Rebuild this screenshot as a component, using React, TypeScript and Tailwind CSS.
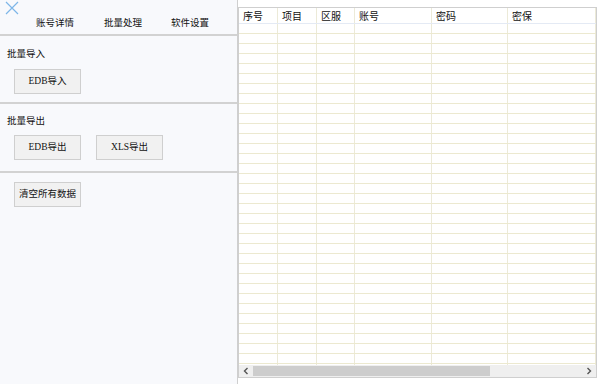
import React from "react";

const cols = [
  { w: 39, t: "序号" },
  { w: 39, t: "项目" },
  { w: 38, t: "区服" },
  { w: 77, t: "账号" },
  { w: 76, t: "密码" },
  { w: 88, t: "密保" },
];

const btnFont = { fontFamily: '"Liberation Serif", "Noto Sans CJK SC", serif' };

function Btn({ children, className = "" }: { children: React.ReactNode; className?: string }) {
  return (
    <div
      style={btnFont}
      className={
        "h-[25px] w-[67px] flex items-center justify-center border border-[#cfcfcf] bg-[#f1f1f1] text-[9.5px] text-[#111] whitespace-nowrap " +
        className
      }
    >
      {children}
    </div>
  );
}

export default function App() {
  const rows = Array.from({ length: 35 });
  return (
    <div
      className="w-[600px] h-[384px] flex bg-white overflow-hidden"
      style={{ fontFamily: '"Noto Sans CJK SC", "Liberation Sans", sans-serif' }}
    >
      {/* Left panel */}
      <div className="w-[239px] h-full flex flex-col bg-[#f8f9fc] border-r border-[#cfcfcf]">
        <div className="h-[34px] relative">
          <svg className="absolute left-[5px] top-[1px]" width="14" height="14" viewBox="0 0 14 14">
            <path d="M1 1 L13 13 M13 1 L1 13" stroke="#7db6e8" strokeWidth="1.2" fill="none" />
          </svg>
          <div className="flex pt-[15px] text-[9.5px] text-[#111] leading-[14px] whitespace-nowrap">
            <span className="ml-[36px]">账号详情</span>
            <span className="ml-[30px]">批量处理</span>
            <span className="ml-[29px]">软件设置</span>
          </div>
        </div>
        <div className="h-[2px] bg-[#d2d2d2]" />
        <div className="h-[66px] flex flex-col pl-[7px]">
          <div className="text-[9.5px] leading-[14px] text-[#111] mt-[10px]">批量导入</div>
          <Btn className="ml-[7px] mt-[9px]">EDB导入</Btn>
        </div>
        <div className="h-[2px] bg-[#d2d2d2]" />
        <div className="h-[67px] flex flex-col pl-[7px]">
          <div className="text-[9.5px] leading-[14px] text-[#111] mt-[9px]">批量导出</div>
          <div className="flex gap-[15px] ml-[7px] mt-[8px]">
            <Btn>EDB导出</Btn>
            <Btn>XLS导出</Btn>
          </div>
        </div>
        <div className="h-[2px] bg-[#d2d2d2]" />
        <div className="pl-[14px] pt-[9px]">
          <Btn>清空所有数据</Btn>
        </div>
      </div>

      {/* Right table */}
      <div className="flex-1 h-full pt-[7px] pr-[3px] pb-[6px]">
        <div className="h-full border border-[#cfcfcf] flex flex-col overflow-hidden">
          <div className="flex-1 overflow-hidden relative">
            <div className="flex h-[16px] border-b border-[#e4eaf4] bg-white">
              {cols.map((c, i) => (
                <div
                  key={i}
                  style={{ width: c.w }}
                  className="shrink-0 text-[10px] leading-[16px] text-[#111] pl-[4px] border-r border-[#ecead8]"
                >
                  {c.t}
                </div>
              ))}
            </div>
            {rows.map((_, r) => (
              <div key={r} className="flex h-[10px] border-b border-[#ece9d0]">
                {cols.map((c, i) => (
                  <div key={i} style={{ width: c.w }} className="shrink-0 border-r border-[#ecead8]" />
                ))}
              </div>
            ))}
          </div>
          <div className="h-[12px] flex items-center bg-[#efefef] shrink-0">
            <div className="w-[14px] flex items-center justify-center">
              <svg width="6" height="8" viewBox="0 0 6 8">
                <path d="M4.5 1 L1.5 4 L4.5 7" stroke="#555" strokeWidth="1.4" fill="none" />
              </svg>
            </div>
            <div className="w-[237px] h-[10px] bg-[#cdcdcd]" />
            <div className="flex-1" />
            <div className="w-[14px] flex items-center justify-center">
              <svg width="6" height="8" viewBox="0 0 6 8">
                <path d="M1.5 1 L4.5 4 L1.5 7" stroke="#555" strokeWidth="1.4" fill="none" />
              </svg>
            </div>
          </div>
        </div>
      </div>
    </div>
  );
}
